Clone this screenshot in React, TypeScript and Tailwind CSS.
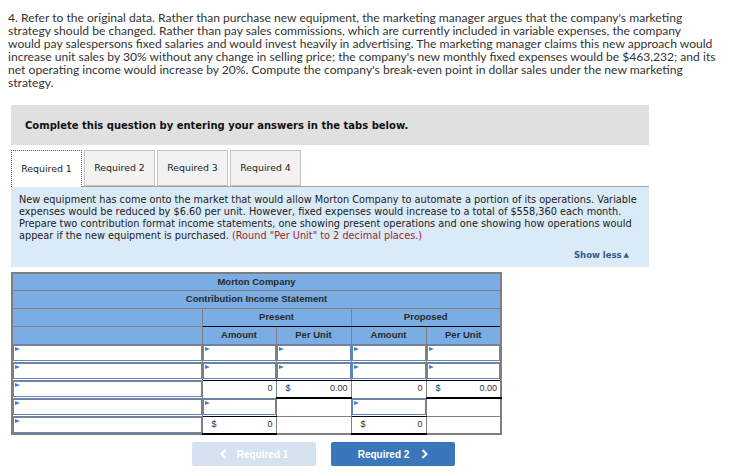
import React from 'react';

type CellSpec =
  | { kind: 'input'; bottomBlack?: boolean }
  | { kind: 'blank' }
  | { kind: 'value'; value: string; dollar?: boolean; bottomThick?: boolean };

const introLines = [
  "4. Refer to the original data. Rather than purchase new equipment, the marketing manager argues that the company's marketing",
  'strategy should be changed. Rather than pay sales commissions, which are currently included in variable expenses, the company',
  'would pay salespersons fixed salaries and would invest heavily in advertising. The marketing manager claims this new approach would',
  "increase unit sales by 30% without any change in selling price; the company's new monthly fixed expenses would be $463,232; and its",
  "net operating income would increase by 20%. Compute the company's break-even point in dollar sales under the new marketing",
  'strategy.',
];

const tabs = ['Required 1', 'Required 2', 'Required 3', 'Required 4'];

// body rows: label + present amount, per unit + proposed amount, per unit
const bodyRows: CellSpec[][] = [
  [{ kind: 'input' }, { kind: 'input' }, { kind: 'input' }, { kind: 'input' }, { kind: 'input' }],
  [
    { kind: 'input' },
    { kind: 'input', bottomBlack: true },
    { kind: 'input', bottomBlack: true },
    { kind: 'input', bottomBlack: true },
    { kind: 'input', bottomBlack: true },
  ],
  [
    { kind: 'input' },
    { kind: 'value', value: '0' },
    { kind: 'value', value: '0.00', dollar: true, bottomThick: true },
    { kind: 'value', value: '0' },
    { kind: 'value', value: '0.00', dollar: true, bottomThick: true },
  ],
  [
    { kind: 'input' },
    { kind: 'input', bottomBlack: true },
    { kind: 'blank' },
    { kind: 'input', bottomBlack: true },
    { kind: 'blank' },
  ],
  [
    { kind: 'input' },
    { kind: 'value', value: '0', dollar: true, bottomThick: true },
    { kind: 'blank' },
    { kind: 'value', value: '0', dollar: true, bottomThick: true },
    { kind: 'blank' },
  ],
];

function Flag() {
  return (
    <span className="absolute left-[1px] top-[1px] h-0 w-0 border-y-[2.5px] border-l-[5px] border-y-transparent border-l-[#3f7fd0]" />
  );
}

function BodyCell({ spec }: { spec: CellSpec }) {
  if (spec.kind === 'input') {
    return (
      <td
        className={`h-[18px] border border-[#7f7f7f] bg-white p-0 ${
          spec.bottomBlack ? 'border-b-black' : ''
        }`}
      >
        <div className="relative h-[16px] border border-[#5f86ba] bg-white">
          <Flag />
        </div>
      </td>
    );
  }
  if (spec.kind === 'blank') {
    return <td className="h-[18px] border border-[#7f7f7f] bg-white p-0" />;
  }
  return (
    <td
      className={`h-[18px] border bg-white p-0 ${
        spec.bottomThick ? 'border-[#7f7f7f] border-b-2 border-b-black' : 'border-[#7f7f7f]'
      }`}
    >
      <div className="flex h-[16px] items-center justify-between pl-[9px] pr-[3px] text-[9px] text-[#333]">
        <span>{spec.dollar ? '$' : ''}</span>
        <span>{spec.value}</span>
      </div>
    </td>
  );
}

export default function App() {
  return (
    <div className="h-[476px] w-[743px] overflow-hidden bg-white">
      {/* Question text */}
      <div className="pl-[8px] pt-[11px] font-['Lato',sans-serif] text-[12.1px] leading-[13px] text-[#333]">
        {introLines.map((line) => (
          <div key={line} className="whitespace-nowrap">
            {line}
          </div>
        ))}
      </div>

      <div className="ml-[11px] w-[638px] font-['DejaVu_Sans',Verdana,sans-serif]">
        {/* Instruction banner */}
        <div className="mt-[16px] flex h-[40px] items-center bg-[#e0e0e0] pl-[14px] text-[10px] font-bold text-[#111]">
          Complete this question by entering your answers in the tabs below.
        </div>

        {/* Tabs */}
        <div className="mt-[5px] flex items-end gap-[2px]">
          {tabs.map((t, i) =>
            i === 0 ? (
              <div
                key={t}
                className="relative z-10 -mb-px flex h-[37px] w-[71px] items-center justify-center border border-b-0 border-dotted border-[#3a5f95] bg-white text-[9.4px] text-[#222]"
              >
                {t}
              </div>
            ) : (
              <div
                key={t}
                className="flex h-[36px] w-[71px] items-center justify-center border border-[#c4c4c4] bg-[#f2f2f2] text-[9.4px] text-[#222]"
              >
                {t}
              </div>
            ),
          )}
        </div>

        {/* Info panel */}
        <div className="h-[81px] border-t border-[#a3a3a3] bg-[#dbeaf7] pl-[8px] pr-[20px] pt-[7px] text-[9.75px] leading-[12px] text-[#222]">
          <div className="whitespace-nowrap">
            New equipment has come onto the market that would allow Morton Company to automate a portion of its operations. Variable
          </div>
          <div className="whitespace-nowrap">
            expenses would be reduced by $6.60 per unit. However, fixed expenses would increase to a total of $558,360 each month.
          </div>
          <div className="whitespace-nowrap">
            Prepare two contribution format income statements, one showing present operations and one showing how operations would
          </div>
          <div className="whitespace-nowrap">
            appear if the new equipment is purchased. <span className="text-[#a1262a]">(Round "Per Unit" to 2 decimal places.)</span>
          </div>
          <div className="mt-[7px] flex justify-end text-[8.5px] font-bold text-[#35598a]">
            <span>Show less</span>
            <span className="ml-[2px] text-[7px]">▲</span>
          </div>
        </div>
      </div>

      {/* Income statement table */}
      <div className="ml-[11px] mt-[5px] font-['Liberation_Sans',Arial,sans-serif]">
        <table className="table-fixed border-collapse border-2 border-[#7f7f7f]">
          <colgroup>
            <col className="w-[190px]" />
            <col className="w-[74px]" />
            <col className="w-[75px]" />
            <col className="w-[75px]" />
            <col className="w-[75px]" />
          </colgroup>
          <thead className="bg-[#79ade3] text-[9.5px] font-bold text-[#2a2a2a]">
            <tr>
              <th colSpan={5} className="h-[17px] border border-[#7f7f7f] p-0 text-center">
                Morton Company
              </th>
            </tr>
            <tr>
              <th colSpan={5} className="h-[18px] border border-[#7f7f7f] p-0 text-center">
                Contribution Income Statement
              </th>
            </tr>
            <tr>
              <th className="h-[18px] border border-[#7f7f7f] p-0" />
              <th colSpan={2} className="h-[18px] border border-[#7f7f7f] border-b-black p-0 text-center">
                Present
              </th>
              <th colSpan={2} className="h-[18px] border border-[#7f7f7f] border-b-black p-0 text-center">
                Proposed
              </th>
            </tr>
            <tr>
              <th className="h-[18px] border border-[#7f7f7f] p-0" />
              <th className="h-[18px] border border-[#7f7f7f] p-0 text-center">Amount</th>
              <th className="h-[18px] border border-[#7f7f7f] p-0 text-center">Per Unit</th>
              <th className="h-[18px] border border-[#7f7f7f] p-0 text-center">Amount</th>
              <th className="h-[18px] border border-[#7f7f7f] p-0 text-center">Per Unit</th>
            </tr>
          </thead>
          <tbody>
            {bodyRows.map((row, r) => (
              <tr key={r}>
                {row.map((spec, c) => (
                  <BodyCell key={c} spec={spec} />
                ))}
              </tr>
            ))}
          </tbody>
        </table>
      </div>

      {/* Navigation */}
      <div className="ml-[192px] mt-[7px] flex gap-[15px] font-['Liberation_Sans',Arial,sans-serif]">
        <button className="flex h-[24px] w-[124px] items-center justify-center gap-[10px] rounded-[2px] bg-[#d6e2f0] text-[10px] font-bold text-white">
          <svg width="7" height="10" viewBox="0 0 7 10" fill="none" stroke="white" strokeWidth="2">
            <path d="M5.5 1L1.5 5l4 4" />
          </svg>
          <span>Required 1</span>
        </button>
        <button className="flex h-[24px] w-[124px] items-center justify-center gap-[12px] rounded-[2px] bg-[#3a76ba] text-[10px] font-bold text-white">
          <span>Required 2</span>
          <svg width="7" height="10" viewBox="0 0 7 10" fill="none" stroke="white" strokeWidth="2">
            <path d="M1.5 1l4 4-4 4" />
          </svg>
        </button>
      </div>
    </div>
  );
}
